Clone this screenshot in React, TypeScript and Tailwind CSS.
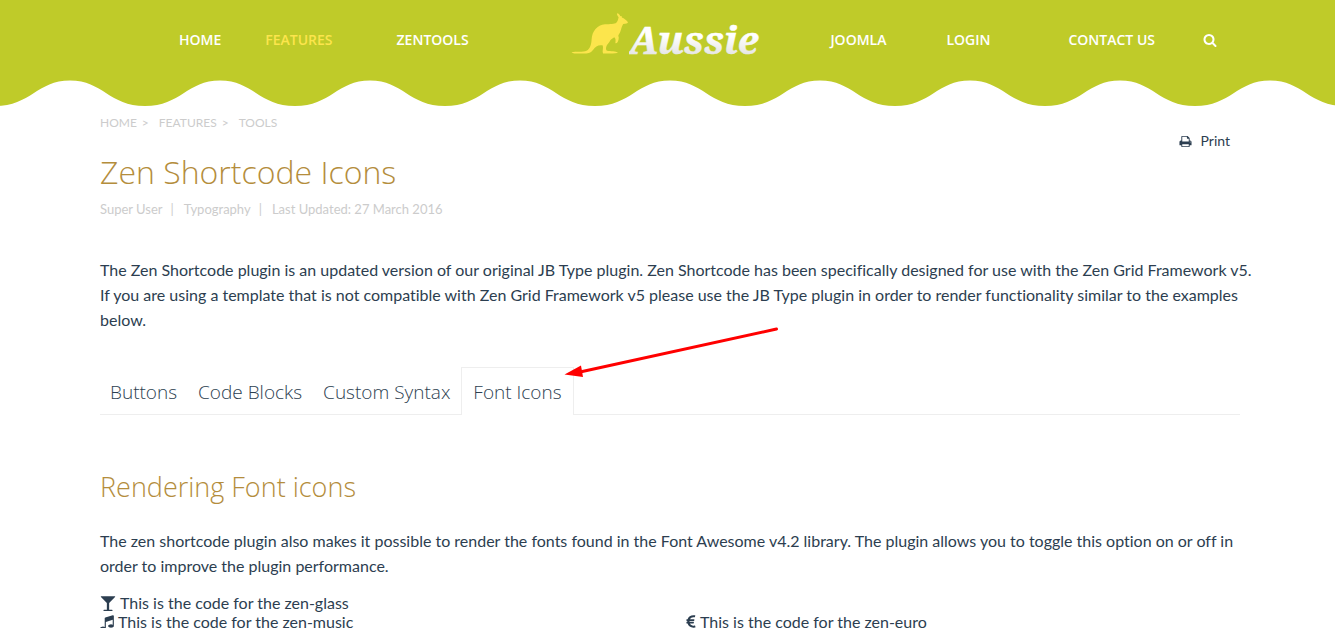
import React from "react";

const SEARCH =
  "M1216 832q0-185-131.5-316.5t-316.5-131.5-316.5 131.5-131.5 316.5 131.5 316.5 316.5 131.5 316.5-131.5 131.5-316.5zm512 832q0 52-38 90t-90 38q-54 0-90-38l-343-342q-179 124-399 124-143 0-273.5-55.5t-225-150-150-225-55.5-273.5 55.5-273.5 150-225 225-150 273.5-55.5 273.5 55.5 225 150 150 225 55.5 273.5q0 220-124 399l343 343q37 37 37 90z";
const PRINT =
  "M448 1536h896v-256h-896v256zm0-640h896v-384h-160q-40 0-68-28t-28-68v-160h-640v640zm1152 64q0-26-19-45t-45-19-45 19-19 45 19 45 45 19 45-19 19-45zm128 0v416q0 13-9.5 22.5t-22.5 9.5h-224v160q0 40-28 68t-68 28h-960q-40 0-68-28t-28-68v-160h-224q-13 0-22.5-9.5t-9.5-22.5v-416q0-79 56.5-135.5t135.5-56.5h64v-544q0-40 28-68t68-28h672q40 0 88 20t76 48l152 152q28 28 48 76t20 88v256h64q79 0 135.5 56.5t56.5 135.5z";
const GLASS =
  "M1699 186q0 35-43 78l-632 632v768h320q26 0 45 19t19 45-19 45-45 19h-896q-26 0-45-19t-19-45 19-45 45-19h320v-768l-632-632q-43-43-43-78 0-23 18-36.5t38-17.5 43-4h1408q23 0 43 4t38 17.5 18 36.5z";
const MUSIC =
  "M1664 224v1120q0 50-34 89t-86 60.5-103.5 32-96.5 10.5-96.5-10.5-103.5-32-86-60.5-34-89 34-89 86-60.5 103.5-32 96.5-10.5q105 0 192 39v-537l-768 237v709q0 50-34 89t-86 60.5-103.5 32-96.5 10.5-96.5-10.5-103.5-32-86-60.5-34-89 34-89 86-60.5 103.5-32 96.5-10.5q105 0 192 39v-967q0-31 19-56.5t49-35.5l832-256q12-4 28-4 40 0 68 28t28 68z";
const EURO =
  "M1360 1307l35 159q3 12-3 22.5t-17 14.5l-5 1q-4 2-10.5 3.5t-16 4.5-21.5 5.5-25.5 5-30 5-33.5 4.5-36.5 3-38.5 1q-234 0-409-130.5t-238-351.5h-95q-13 0-22.5-9.5t-9.5-22.5v-113q0-13 9.5-22.5t22.5-9.5h66q-2-57 1-105h-67q-14 0-23-9t-9-23v-114q0-14 9-23t23-9h98q67-210 243.5-338t400.5-128q102 0 194 23 11 3 20 15 6 11 3 24l-43 159q-3 13-14 19.5t-24 2.5l-4-1q-4-1-11.5-2.5l-17.5-3.5-22.5-3.5-26-3-29-2.5-29.5-1q-126 0-226 64t-150 176h468q16 0 25 12 10 12 7 26l-24 114q-5 26-32 26h-488q-3 37 0 105h459q15 0 25 12 9 12 6 27l-24 112q-2 11-11 18.5t-20 7.5h-387q48 117 149.5 185.5t228.5 68.5q18 0 36-1.5t33.5-3.5 29.5-4.5 24.5-5 18.5-4.5l12-3 5-2q13-5 26 2 12 7 15 21z";

function Glyph({ d, className, viewBox = "0 0 1792 1792" }: { d: string; className: string; viewBox?: string }) {
  return (
    <svg viewBox={viewBox} className={className} fill="currentColor" aria-hidden="true">
      <path d={d} />
    </svg>
  );
}

function Kangaroo() {
  return (
    <svg viewBox="0 0 58 42" className="h-[42px] w-[58px] shrink-0" fill="#fce54c" aria-hidden="true">
      <path d="M0.5 39.2C5 38.3 12 39.4 15.500 37.800C19.500 35.800 20.300 31 20.600 26.500C21.200 18 26 12.200 34 11.300C39 10.800 43.500 11.400 45.500 9.400C46.900 7.900 47.200 6 47.600 4.300C46.300 2.700 45.600 1.200 46.200 0.300C47.600 0.400 48.700 1.800 49.300 3.200C50.300 2.500 50.900 3 50.900 4.500C53 5.500 55.600 7.200 57 9.200C56.700 10.500 55 10.900 52.200 10.900C50.800 13 50.300 15.800 49.400 18.500C48.800 20.400 47.600 21.500 47.300 22.700C48.400 25 47.400 28 46 30L44.300 30.200C44.900 27.300 44.600 25.200 43.300 24.200C41.800 25.200 40.200 26 39.200 27.500C38.300 29.700 36.500 31 35.500 33C34.800 35 34.700 37 36 37.700C39.500 38.300 45 38 47 39.600C46 40.700 40 40.600 32 40.500C31 38 32.500 35.500 31.800 32.500C27.500 31.500 24.500 33.500 22 37C19.500 40.300 17 40.600 12 40.600C7 40.600 2 40.900 0.500 39.200Z" />
    </svg>
  );
}

function Waves() {
  return (
    <svg className="block h-[26px] w-full" aria-hidden="true">
      <defs>
        <pattern id="scallop" x="-5" y="0" width="150" height="26" patternUnits="userSpaceOnUse">
          <path d="M0 0H150V26C114 26 108 0.500 75 0.500C42 0.500 36 26 0 26Z" fill="#bfcb29" />
        </pattern>
      </defs>
      <rect width="100%" height="26" fill="url(#scallop)" />
    </svg>
  );
}

function NavLink({ label, className }: { label: string; className: string }) {
  return (
    <a href="#" className={`whitespace-nowrap ${className}`}>
      {label}
    </a>
  );
}

function CodeLine({ icon, children, viewBox, size = "w-4" }: { icon: string; children: string; viewBox?: string; size?: string }) {
  return (
    <li className="flex items-center gap-1">
      <Glyph d={icon} viewBox={viewBox} className={`h-4 ${size}`} />
      <span>{children}</span>
    </li>
  );
}

const INACTIVE_TABS = ["Buttons", "Code Blocks", "Custom Syntax"];

export default function App() {
  return (
    <div className="min-h-screen bg-white font-['Lato',sans-serif] text-base text-[#2c3e50] [font-variant-ligatures:none]">
      <header>
        <div className="bg-[#bfcb29] pl-[5px]">
          <nav
            aria-label="Main"
            className="mx-auto flex h-20 max-w-[1140px] items-center pr-[23px] pl-[79px] font-['Open_Sans',sans-serif] text-sm font-semibold"
          >
            <NavLink label="HOME" className="text-white" />
            <NavLink label="FEATURES" className="ml-11 text-[#fce54c]" />
            <NavLink label="ZENTOOLS" className="ml-16 text-white" />
            <a href="#" aria-label="Aussie" className="ml-[102px] flex items-center pb-3">
              <Kangaroo />
              <svg viewBox="0 0 140 60" className="h-[60px] w-[140px]" role="img" aria-label="Aussie">
                <defs>
                  <linearGradient id="silver" x1="0" y1="0" x2="0" y2="1">
                    <stop offset="0.45" stopColor="#ffffff" />
                    <stop offset="0.85" stopColor="#e2e2e2" />
                  </linearGradient>
                </defs>
                <text
                  x="0"
                  y="50"
                  fill="url(#silver)"
                  stroke="url(#silver)"
                  strokeWidth="0.5"
                  fontFamily="'Noto Serif','DejaVu Serif',serif"
                  fontSize="39"
                  fontStyle="italic"
                  fontWeight="700"
                >
                  Aussie
                </text>
              </svg>
            </a>
            <NavLink label="JOOMLA" className="ml-auto text-white" />
            <NavLink label="LOGIN" className="ml-[60px] text-white" />
            <NavLink label="CONTACT US" className="ml-[78px] text-white" />
            <button type="button" aria-label="Search" className="ml-12 text-white">
              <Glyph d={SEARCH} className="size-[14px]" />
            </button>
          </nav>
        </div>
        <Waves />
      </header>

      <div className="pl-[5px]">
        <main className="mx-auto max-w-[1140px]">
          <div className="flex justify-between">
            <div>
              <nav aria-label="Breadcrumb" className="flex pt-2 text-xs leading-[18px] text-[#cccccc]">
                <a href="#">HOME</a>
                <span className="mr-[10px] ml-[5px]">&gt;</span>
                <a href="#">FEATURES</a>
                <span className="mr-[10px] ml-[5px]">&gt;</span>
                <a href="#">TOOLS</a>
              </nav>
              <h1 className="mt-5 font-['Open_Sans',sans-serif] text-[32px] leading-10 font-light text-[#b48d3c]">
                Zen Shortcode Icons
              </h1>
              <div className="mt-2 flex text-[13px] leading-[18px] text-[#cccccc]">
                <span>Super User</span>
                <span className="mr-[10px] ml-2">|</span>
                <span>Typography</span>
                <span className="mr-[10px] ml-2">|</span>
                <span>Last Updated: 27 March 2016</span>
              </div>
            </div>
            <a href="#" className="mt-[25px] mr-[10px] flex h-5 items-center gap-[9px] text-sm">
              <Glyph d={PRINT} className="size-[13px]" />
              Print
            </a>
          </div>

          <p className="-mr-5 pt-[39px] leading-[25px]">
            The Zen Shortcode plugin is an updated version of our original JB Type plugin. Zen Shortcode has been
            specifically designed for use with the Zen Grid Framework v5. If you are using a template that is not
            compatible with Zen Grid Framework v5 please use the JB Type plugin in order to render functionality
            similar to the examples below.
          </p>

          <div className="relative mt-[35px] border-b border-[#eeeeee]">
            <div role="tablist" className="-mb-px flex gap-px font-['Open_Sans',sans-serif] text-[19px] font-light">
              {INACTIVE_TABS.map((label) => (
                <button
                  key={label}
                  type="button"
                  role="tab"
                  aria-selected="false"
                  className="h-12 border-t border-transparent px-[10px] pt-0.5"
                >
                  {label}
                </button>
              ))}
              <button
                type="button"
                role="tab"
                aria-selected="true"
                className="h-12 border-x border-t border-[#eeeeee] bg-white px-[11px] pt-0.5"
              >
                Font Icons
              </button>
            </div>
            <svg
              viewBox="0 0 216 54"
              className="pointer-events-none absolute top-[-42px] left-[464px] h-[54px] w-[216px]"
              aria-hidden="true"
            >
              <path d="M212.500 4L16 47" stroke="#ff0000" strokeWidth="3" strokeLinecap="round" />
              <path d="M0.500 49.500L17 40.500L19 52Z" fill="#ff0000" />
            </svg>
          </div>

          <h2 className="mt-[54px] font-['Open_Sans',sans-serif] text-[27px] leading-9 font-light text-[#b48d3c]">
            Rendering Font icons
          </h2>
          <p className="mt-[23px] leading-[25px]">
            The zen shortcode plugin also makes it possible to render the fonts found in the Font Awesome v4.2
            library. The plugin allows you to toggle this option on or off in order to improve the plugin performance.
          </p>

          <div className="mt-[15px] grid grid-cols-2 gap-x-8 leading-[19px]">
            <ul>
              <CodeLine icon={GLASS}>This is the code for the zen-glass</CodeLine>
              <CodeLine icon={MUSIC} viewBox="128 0 1536 1792" size="w-[14px]">
                This is the code for the zen-music
              </CodeLine>
            </ul>
            <ul className="pt-[19px]">
              <CodeLine icon={EURO} viewBox="384 0 1024 1792" size="w-[10px]">
                This is the code for the zen-euro
              </CodeLine>
            </ul>
          </div>
        </main>
      </div>
    </div>
  );
}
